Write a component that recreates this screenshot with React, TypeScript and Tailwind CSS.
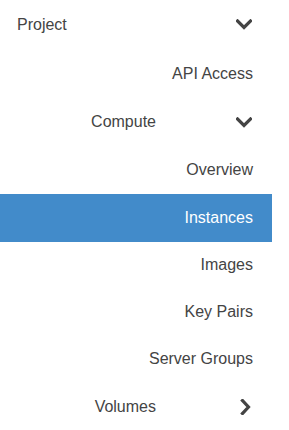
import React from "react";

type Item = {
  label: string;
  h: string;
  kind: "top" | "group" | "leaf";
  open?: boolean;
  active?: boolean;
};

const ITEMS: Item[] = [
  { label: "Project", h: "h-[49px]", kind: "top", open: true },
  { label: "API Access", h: "h-[49px]", kind: "leaf" },
  { label: "Compute", h: "h-[48px]", kind: "group", open: true },
  { label: "Overview", h: "h-[48px]", kind: "leaf" },
  { label: "Instances", h: "h-[48px]", kind: "leaf", active: true },
  { label: "Images", h: "h-[46px]", kind: "leaf" },
  { label: "Key Pairs", h: "h-[47px]", kind: "leaf" },
  { label: "Server Groups", h: "h-[47px]", kind: "leaf" },
  { label: "Volumes", h: "h-[50px]", kind: "group", open: false },
];

function Chevron({ open }: { open?: boolean }) {
  if (open) {
    return (
      <svg width="16" height="11" viewBox="0 0 16 11" className="block">
        <polyline
          points="1.5,2 8,8.5 14.5,2"
          fill="none"
          stroke="#444"
          strokeWidth="3.2"
          strokeLinecap="square"
        />
      </svg>
    );
  }
  return (
    <svg width="11" height="16" viewBox="0 0 11 16" className="block">
      <polyline
        points="2.5,1.5 8.5,8 2.5,14.5"
        fill="none"
        stroke="#444"
        strokeWidth="3.2"
        strokeLinecap="square"
      />
    </svg>
  );
}

export default function App() {
  return (
    <div className="min-h-[430px] w-[289px] bg-white font-['Liberation_Sans',Arial,sans-serif] text-[16px] text-[#444]">
      <nav className="w-[272px]">
        {ITEMS.map((item) => {
          if (item.kind === "top") {
            return (
              <div
                key={item.label}
                className={`flex ${item.h} items-center justify-between pl-[17px] pr-[20px]`}
              >
                <span>{item.label}</span>
                <Chevron open={item.open} />
              </div>
            );
          }
          if (item.kind === "group") {
            return (
              <div
                key={item.label}
                className={`flex ${item.h} items-center justify-end pr-[20px]`}
              >
                <span>{item.label}</span>
                <span className="flex w-[96px] justify-end">
                  <span className={item.open ? "" : "pr-[1px]"}>
                    <Chevron open={item.open} />
                  </span>
                </span>
              </div>
            );
          }
          return (
            <a
              key={item.label}
              href="#"
              className={`flex ${item.h} items-center justify-end pr-[19px] ${
                item.active ? "bg-[#428bca] text-white" : ""
              }`}
            >
              {item.label}
            </a>
          );
        })}
      </nav>
    </div>
  );
}
